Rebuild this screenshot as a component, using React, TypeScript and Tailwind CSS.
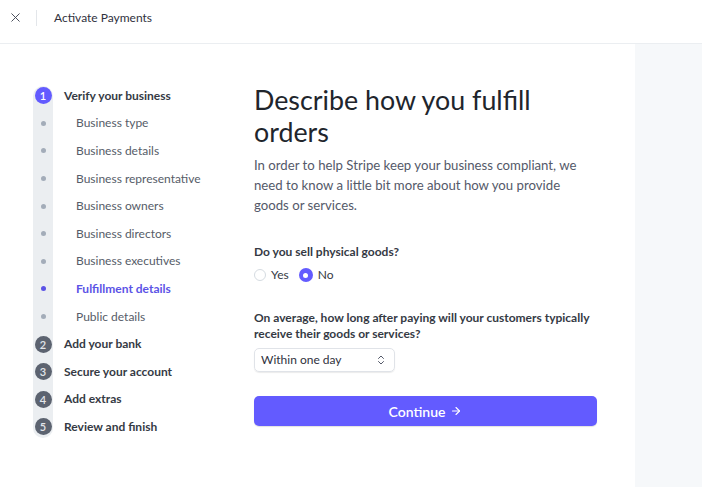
import { X, ArrowRight, ChevronsUpDown } from 'lucide-react';

const substeps = [
  'Business type',
  'Business details',
  'Business representative',
  'Business owners',
  'Business directors',
  'Business executives',
  'Fulfillment details',
  'Public details',
];

const steps = ['Add your bank', 'Secure your account', 'Add extras', 'Review and finish'];

function StepCircle({ n, active }: { n: number; active?: boolean }) {
  return (
    <div
      className={
        'w-[17px] h-[17px] rounded-full flex items-center justify-center text-[11px] font-semibold leading-none ' +
        (active ? 'bg-[#635bff] text-white' : 'bg-[#5c6370] text-[#e3e6ea]')
      }
    >
      {n}
    </div>
  );
}

function Sidebar() {
  return (
    <div className="relative pt-[38px] pl-[34px] w-[254px] shrink-0">
      <div className="absolute left-[33px] top-[42px] w-[20px] h-[352px] rounded-full bg-[#ebeef1]" />
      <ul className="relative">
        <li className="flex items-center h-[27.6px]">
          <div className="w-[18px] flex justify-center">
            <StepCircle n={1} active />
          </div>
          <span className="ml-[12px] text-[12px] font-bold text-[#353a44]">Verify your business</span>
        </li>
        {substeps.map((s) => {
          const active = s === 'Fulfillment details';
          return (
            <li key={s} className="flex items-center h-[27.6px]">
              <div className="w-[18px] flex justify-center">
                <div className={'w-[5px] h-[5px] rounded-full ' + (active ? 'bg-[#5b53e6]' : 'bg-[#a3acb9]')} />
              </div>
              <span
                className={
                  'ml-[24px] text-[12px] ' +
                  (active ? 'font-bold text-[#5b53e6]' : 'text-[#565c68]')
                }
              >
                {s}
              </span>
            </li>
          );
        })}
        {steps.map((s, i) => (
          <li key={s} className="flex items-center h-[27.6px]">
            <div className="w-[18px] flex justify-center">
              <StepCircle n={i + 2} />
            </div>
            <span className="ml-[12px] text-[12px] font-bold text-[#353a44]">{s}</span>
          </li>
        ))}
      </ul>
    </div>
  );
}

export default function App() {
  return (
    <div
      className="w-[702px] h-[487px] bg-white flex flex-col overflow-hidden"
      style={{ fontFamily: '"Segoe UI", Lato, "Noto Sans", sans-serif' }}
    >
      <header className="h-[44px] shrink-0 border-b border-[#ebeef1] flex items-center pb-[8px]">
        <X className="ml-[8px] w-[15px] h-[15px] text-[#414552]" strokeWidth={1.5} />
        <div className="ml-[13px] w-px h-[16px] bg-[#e3e6ea]" />
        <span className="ml-[17px] text-[12px] text-[#30313d]">Activate Payments</span>
      </header>
      <div className="flex flex-1">
        <Sidebar />
        <main className="w-[381px] shrink-0 pt-[40px] pr-[38px]">
          <h1 className="text-[26.8px] leading-[32px] font-normal text-[#21252c]">
            Describe how you fulfill orders
          </h1>
          <p className="mt-[7px] w-[335px] text-[13.2px] leading-[20px] text-[#545969]">
            In order to help Stripe keep your business compliant, we need to know a little bit more about how you
            provide goods or services.
          </p>
          <div className="mt-[28px]">
            <div className="text-[12px] font-bold text-[#353a44]">Do you sell physical goods?</div>
            <div className="mt-[5px] flex items-center text-[12px] text-[#353a44]">
              <span className="w-[12px] h-[12px] rounded-full border border-[#d5dbe1] bg-white" />
              <span className="ml-[5px]">Yes</span>
              <span className="ml-[10px] w-[14px] h-[14px] rounded-full bg-[#635bff] flex items-center justify-center">
                <span className="w-[5px] h-[5px] rounded-full bg-white" />
              </span>
              <span className="ml-[5px]">No</span>
            </div>
          </div>
          <div className="mt-[26px]">
            <div className="text-[12px] leading-[16px] font-bold text-[#353a44]">
              On average, how long after paying will your customers typically receive their goods or services?
            </div>
            <div className="mt-[6px] w-[141px] h-[24px] rounded-[5px] border border-[#e0e3e8] shadow-[0_1px_1px_rgba(0,0,0,0.08)] flex items-center justify-between pl-[6px] pr-[7px] text-[12px] text-[#30313d]">
              <span>Within one day</span>
              <ChevronsUpDown className="w-[12px] h-[12px] text-[#545969]" strokeWidth={2} />
            </div>
          </div>
          <button className="mt-[24px] w-[343px] h-[30px] rounded-[5px] bg-[#635bff] text-white text-[14px] font-semibold flex items-center justify-center shadow-[0_1px_1px_rgba(0,0,0,0.12)]">
            Continue
            <ArrowRight className="ml-[5px] w-[12px] h-[12px]" strokeWidth={2.2} />
          </button>
        </main>
        <div className="flex-1 bg-[#f6f8fa]" />
      </div>
    </div>
  );
}
